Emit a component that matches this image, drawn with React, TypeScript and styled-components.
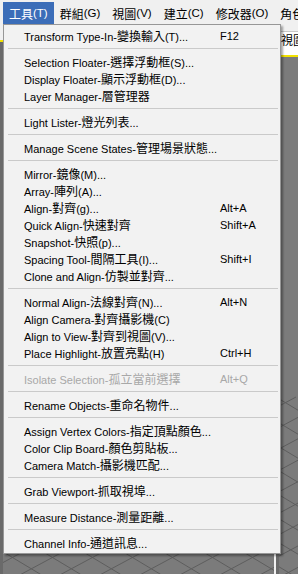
import styled, { createGlobalStyle } from 'styled-components'

type Entry = { label: string, shortcut?: string, disabled?: boolean } | 'sep'

const menuBar = ['工具(T)', '群組(G)', '視圖(V)', '建立(C)', '修改器(O)', '角色']

const entries: Entry[] = [
    { label: 'Transform Type-In-變換輸入(T)...', shortcut: 'F12' },
    'sep',
    { label: 'Selection Floater-選擇浮動框(S)...' },
    { label: 'Display Floater-顯示浮動框(D)...' },
    { label: 'Layer Manager-層管理器' },
    'sep',
    { label: 'Light Lister-燈光列表...' },
    'sep',
    { label: 'Manage Scene States-管理場景狀態...' },
    'sep',
    { label: 'Mirror-鏡像(M)...' },
    { label: 'Array-陣列(A)...' },
    { label: 'Align-對齊(g)...', shortcut: 'Alt+A' },
    { label: 'Quick Align-快速對齊', shortcut: 'Shift+A' },
    { label: 'Snapshot-快照(p)...' },
    { label: 'Spacing Tool-間隔工具(I)...', shortcut: 'Shift+I' },
    { label: 'Clone and Align-仿製並對齊...' },
    'sep',
    { label: 'Normal Align-法線對齊(N)...', shortcut: 'Alt+N' },
    { label: 'Align Camera-對齊攝影機(C)' },
    { label: 'Align to View-對齊到視圖(V)...' },
    { label: 'Place Highlight-放置亮點(H)', shortcut: 'Ctrl+H' },
    'sep',
    { label: 'Isolate Selection-孤立當前選擇', shortcut: 'Alt+Q', disabled: true },
    'sep',
    { label: 'Rename Objects-重命名物件...' },
    'sep',
    { label: 'Assign Vertex Colors-指定頂點顏色...' },
    { label: 'Color Clip Board-顏色剪貼板...' },
    { label: 'Camera Match-攝影機匹配...' },
    'sep',
    { label: 'Grab Viewport-抓取視埠...' },
    'sep',
    { label: 'Measure Distance-測量距離...' },
    'sep',
    { label: 'Channel Info-通道訊息...' },
]

// wrap the CJK runs so they can be a touch larger than the latin text
function mixed(text: string) {
    return text.split(/([\u3400-\u9fff]+)/).map((part, i) =>
        /[\u3400-\u9fff]/.test(part) ? <Zh key={i}>{part}</Zh> : part
    )
}

function Grid() {
    const lines: string[] = []
    for (let i = -6; i < 14; i++) {
        lines.push(`M${i * 40 - 300} 680 L${i * 40 + 260} 380`)
        lines.push(`M${i * 40 - 80} 380 L${i * 40 + 420} 680`)
    }
    return (
        <GridSvg viewBox="0 0 298 574" preserveAspectRatio="none">
            {lines.map((d, i) => <path key={i} d={d} stroke="#5e5e5e" strokeWidth="1" fill="none" />)}
            <path d="M270 412 L298 432" stroke="#111" strokeWidth="1" />
        </GridSvg>
    )
}

export default function App() {
    return (
        <Screen>
            <GlobalStyle />
            <MenuBar>
                {menuBar.map((m, i) => (
                    <BarItem key={m} active={i === 0}>{mixed(m)}</BarItem>
                ))}
            </MenuBar>
            <Workspace>
                <Viewport>
                    <ViewHeader tall={false} />
                    <ActiveLine />
                    <ViewBody><Grid /></ViewBody>
                </Viewport>
                <Viewport>
                    <ViewHeader tall>
                        <ViewLabel>{mixed('視圖')}</ViewLabel>
                    </ViewHeader>
                    <ActiveLine />
                    <ViewBody><Grid /></ViewBody>
                </Viewport>
            </Workspace>

            <Dropdown>
                {entries.map((e, i) =>
                    e === 'sep' ? (
                        <Separator key={i} />
                    ) : (
                        <Item key={i} disabled={e.disabled}>
                            <Label>{mixed(e.label)}</Label>
                            {e.shortcut && <Shortcut>{e.shortcut}</Shortcut>}
                        </Item>
                    )
                )}
            </Dropdown>
        </Screen>
    )
}

const GlobalStyle = createGlobalStyle`
    html, body {
        margin: 0;
        padding: 0;
        background: #7b7b7b;
    }
    body {
        font-family: "Liberation Sans", "Noto Sans CJK TC", sans-serif;
        font-size: 11px;
        color: #000;
    }
`

const Screen = styled.div`
    position: relative;
    width: 298px;
    height: 574px;
    overflow: hidden;
    display: flex;
    flex-direction: column;
    background: #7b7b7b;
`

const Zh = styled.span`
    font-family: "Noto Sans CJK TC", sans-serif;
    font-size: 12px;
`

const MenuBar = styled.div`
    display: flex;
    align-items: stretch;
    height: 22px;
    padding: 2px 0 0 3px;
    background: #f0f0f0;
    flex-shrink: 0;
`

const BarItem = styled.div<{ active?: boolean }>`
    display: flex;
    align-items: center;
    padding: 0 6px;
    font-size: 11.5px;
    white-space: nowrap;
    color: ${({ active }) => (active ? '#fff' : '#000')};
    background: ${({ active }) => (active ? '#3b6db8' : 'transparent')};
`

const Workspace = styled.div`
    flex: 1;
    display: grid;
    grid-template-columns: 274px 1fr;
    gap: 2px;
    background: #f0f0f0;
`

const Viewport = styled.div`
    display: flex;
    flex-direction: column;
    min-width: 0;
`

const ViewHeader = styled.div<{ tall: boolean }>`
    height: ${({ tall }) => (tall ? '31px' : '16px')};
    background: #f0f0f0;
    display: flex;
    align-items: flex-end;
    padding-left: 3px;
`

const ViewLabel = styled.div`
    height: 24px;
    flex: 1;
    background: #fff;
    border-top: 1px solid #c8c8c8;
    border-left: 1px solid #c8c8c8;
    padding: 1px 0 0 1px;
    box-sizing: border-box;
    white-space: nowrap;
    overflow: hidden;
    line-height: 14px;
`

const ActiveLine = styled.div`
    height: 2px;
    background: #f2e200;
`

const ViewBody = styled.div`
    flex: 1;
    background: #7b7b7b;
    border-left: 3px solid #6a6a6a;
    overflow: hidden;
    position: relative;
`

const GridSvg = styled.svg`
    display: block;
    width: 298px;
    height: 574px;
    margin-left: -3px;
    margin-top: -40px;
`

const Dropdown = styled.div`
    position: absolute;
    left: 3px;
    top: 24px;
    width: 272px;
    padding: 2px;
    background: #f2f2f2;
    border: 1px solid #979797;
    box-shadow: 2px 2px 2px rgba(0, 0, 0, 0.35);
    display: flex;
    flex-direction: column;
`

const Item = styled.div<{ disabled?: boolean }>`
    display: flex;
    align-items: center;
    height: 17px;
    padding-left: 18px;
    white-space: nowrap;
    color: ${({ disabled }) => (disabled ? '#a8a8a8' : '#000')};
`

const Label = styled.span`
    width: 196px;
    flex-shrink: 0;
    overflow: visible;
`

const Shortcut = styled.span`
    font-size: 11px;
`

const Separator = styled.div`
    height: 9px;
    display: flex;
    align-items: center;
    padding-left: 2px;

    &::after {
        content: "";
        flex: 1;
        height: 1px;
        background: #cacaca;
    }
`
